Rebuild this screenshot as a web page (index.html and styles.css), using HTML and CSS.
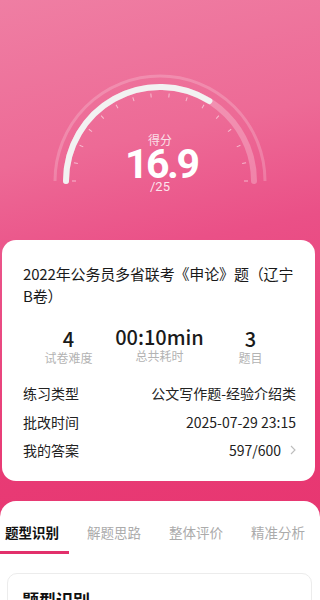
FILE: index.html
```html
<!DOCTYPE html>
<html lang="zh-CN">
<head>
<meta charset="utf-8">
<link rel="stylesheet" href="styles.css">
</head>
<body>
<div class="page">
  <section class="hero">
    <svg class="gauge" width="320" height="240" viewBox="0 0 320 240">
      <path d="M 55 181 A 105 105 0 0 1 265 181" fill="none" stroke="rgba(255,255,255,0.2)" stroke-width="3"/>
      <path d="M 66 181 A 94 94 0 0 1 254 181" fill="none" stroke="rgba(255,255,255,0.25)" stroke-width="6" stroke-linecap="round"/>
      <path d="M 66 181 A 94 94 0 0 1 209.4 101" fill="none" stroke="#f2f2f2" stroke-width="6" stroke-linecap="round"/>
      <g stroke="rgba(255,255,255,0.55)" stroke-width="1">
        <line x1="72" y1="181" x2="76" y2="181"/>
        <line x1="72" y1="181" x2="76" y2="181" transform="rotate(12 160 181)"/>
        <line x1="72" y1="181" x2="76" y2="181" transform="rotate(24 160 181)"/>
        <line x1="72" y1="181" x2="76" y2="181" transform="rotate(36 160 181)"/>
        <line x1="72" y1="181" x2="76" y2="181" transform="rotate(48 160 181)"/>
        <line x1="72" y1="181" x2="76" y2="181" transform="rotate(60 160 181)"/>
        <line x1="72" y1="181" x2="76" y2="181" transform="rotate(72 160 181)"/>
        <line x1="72" y1="181" x2="76" y2="181" transform="rotate(84 160 181)"/>
        <line x1="72" y1="181" x2="76" y2="181" transform="rotate(96 160 181)"/>
        <line x1="72" y1="181" x2="76" y2="181" transform="rotate(108 160 181)"/>
        <line x1="72" y1="181" x2="76" y2="181" transform="rotate(120 160 181)"/>
        <line x1="72" y1="181" x2="76" y2="181" transform="rotate(132 160 181)"/>
        <line x1="72" y1="181" x2="76" y2="181" transform="rotate(144 160 181)"/>
        <line x1="72" y1="181" x2="76" y2="181" transform="rotate(156 160 181)"/>
        <line x1="72" y1="181" x2="76" y2="181" transform="rotate(168 160 181)"/>
        <line x1="72" y1="181" x2="76" y2="181" transform="rotate(180 160 181)"/>
      </g>
    </svg>
    <div class="score">
      <div class="score-label">得分</div>
      <div class="score-value">16.9</div>
      <div class="score-total">/25</div>
    </div>
  </section>

  <section class="card">
    <h1 class="title"><span class="title-line">2022年公务员多省联考《申论》题（辽宁</span><span class="title-line">B卷）</span></h1>
    <div class="stats">
      <div class="stat">
        <div class="stat-num">4</div>
        <div class="stat-label">试卷难度</div>
      </div>
      <div class="stat stat-mid">
        <div class="stat-num">00:10min</div>
        <div class="stat-label">总共耗时</div>
      </div>
      <div class="stat">
        <div class="stat-num">3</div>
        <div class="stat-label">题目</div>
      </div>
    </div>
    <div class="rows">
      <div class="row"><span>练习类型</span><span>公文写作题-经验介绍类</span></div>
      <div class="row"><span>批改时间</span><span>2025-07-29 23:15</span></div>
      <div class="row"><span>我的答案</span><span class="answer">597/600<svg class="chev" width="6" height="10" viewBox="0 0 6 10"><polyline points="1,1 5,5 1,9" fill="none" stroke="#bdbdbd" stroke-width="1.1"/></svg></span></div>
    </div>
  </section>

  <section class="sheet">
    <nav class="tabs">
      <span class="tab active">题型识别</span>
      <span class="tab">解题思路</span>
      <span class="tab">整体评价</span>
      <span class="tab">精准分析</span>
    </nav>
    <div class="indicator"></div>
    <div class="inner">
      <h2 class="inner-title">题型识别</h2>
    </div>
  </section>
</div>
</body>
</html>
```

FILE: styles.css
```css
* { box-sizing: border-box; }
html, body {
  margin: 0;
  padding: 0;
}
body {
  width: 320px;
  height: 600px;
  overflow: hidden;
  font-family: "Noto Sans CJK SC", "Noto Sans", sans-serif;
  background: linear-gradient(168deg, #ef7ea3 0%, #ed6a96 25%, #ea5087 42%, #e83b75 70%, #e7336e 100%);
  color: #1c1c1c;
}
.page {
  display: flex;
  flex-direction: column;
  height: 600px;
}
.hero {
  display: grid;
  height: 240px;
}
.gauge {
  grid-area: 1 / 1;
  display: block;
}
.score {
  grid-area: 1 / 1;
  display: flex;
  flex-direction: column;
  align-items: center;
  padding-top: 131px;
  color: #fff;
}
.score-label {
  font-size: 12px;
  line-height: 17px;
  color: rgba(255,255,255,0.8);
}
.score-value {
  font-family: Roboto, "Noto Sans", sans-serif;
  font-weight: 700;
  font-size: 41px;
  line-height: 32px;
  letter-spacing: -2.5px;
  margin-right: -2.5px;
}
.score-total {
  font-family: Roboto, "Noto Sans", sans-serif;
  font-size: 13px;
  line-height: 14px;
  color: rgba(255,255,255,0.85);
}
.card {
  margin: 0 5px 0 2px;
  background: #fff;
  border-radius: 14px;
  padding: 23px 19px 16px 21px;
}
.title {
  margin: 0;
  font-size: 15px;
  line-height: 22px;
  font-weight: 400;
  color: #1a1a1a;
}
.title-line {
  display: block;
  white-space: nowrap;
  letter-spacing: -0.15px;
}
.stats {
  display: grid;
  grid-template-columns: 1fr 1fr 1fr;
  margin-top: 20px;
  text-align: center;
}
.stat-mid {
  margin-top: -2px;
}
.stat-num {
  font-size: 20px;
  line-height: 23px;
  font-weight: 500;
  color: #1a1a1a;
}
.stat-label {
  font-size: 12px;
  line-height: 16px;
  color: #b3b3b3;
}
.rows {
  margin-top: 13px;
}
.row {
  display: flex;
  justify-content: space-between;
  align-items: center;
  height: 28.5px;
  font-size: 14px;
  color: #222;
}
.answer {
  display: flex;
  align-items: center;
  gap: 9px;
}
.chev {
  display: block;
}
.sheet {
  flex: 1;
  margin-top: 20px;
  background: #fff;
  border-radius: 16px 16px 0 0;
  padding-top: 20px;
}
.tabs {
  display: flex;
  gap: 28px;
  padding-left: 5px;
}
.tab {
  font-size: 13.5px;
  line-height: 22px;
  color: #ababab;
  white-space: nowrap;
}
.tab.active {
  color: #111;
  font-weight: 700;
}
.indicator {
  width: 69px;
  height: 3px;
  background: #e2306b;
  margin-top: 8px;
}
.inner {
  margin: 19px 8px 0 7px;
  border: 1px solid #ececec;
  border-radius: 10px;
  padding: 15px 14px;
}
.inner-title {
  margin: 0;
  font-size: 17px;
  line-height: 22px;
  font-weight: 700;
  color: #111;
}
```
